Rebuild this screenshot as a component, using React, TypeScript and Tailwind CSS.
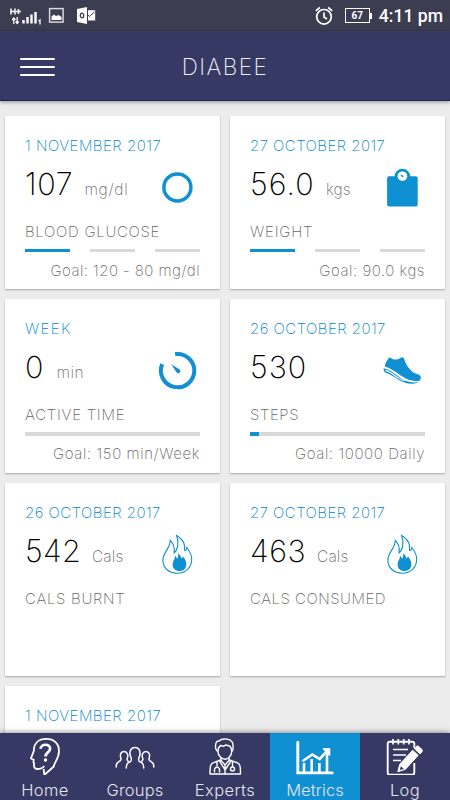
import type { ReactNode } from "react";

type Metric = {
  date: string;
  dateClass: string;
  value: string;
  valueClass: string;
  unit?: string;
  unitClass?: string;
  label: string;
  labelClass: string;
  goal?: string;
  goalClass?: string;
  progress?: "steps" | number;
  icon: ReactNode;
};

const CircleIcon = () => (
  <svg width="40" height="44" viewBox="0 0 40 44" fill="none">
    <circle cx="20.4" cy="23.4" r="13.5" stroke="#0f90d2" strokeWidth="3.5" />
  </svg>
);

const ScaleIcon = () => (
  <svg width="40" height="44" viewBox="0 0 40 44">
    <rect x="5.1" y="12.3" width="30.6" height="30.2" rx="2" fill="#0f90d2" />
    <circle cx="20.4" cy="12.6" r="7.8" fill="#0f90d2" />
    <circle cx="20.4" cy="12.2" r="4.8" fill="#fff" />
    <path d="M18 10.4l3.3 1.2a1 1 0 0 1-1.100 1.600z" fill="#0f90d2" />
  </svg>
);

const TimerIcon = () => (
  <svg width="40" height="44" viewBox="0 0 40 44" fill="none">
    <path d="M18.100 7.100A16.700 16.700 0 1 1 5.200 17.100" stroke="#0f90d2" strokeWidth="4" />
    <path d="M14.300 17.300l7.900 4.900a2.100 2.100 0 1 1-2.900 2.900z" fill="#0f90d2" />
  </svg>
);

const ShoeIcon = () => (
  <svg width="40" height="44" viewBox="0 0 40 44" fill="#0f90d2">
    <path d="M6.500 11.200Q7.500 9.800 9 10.900c1.700 1.600 5 2.300 7.600 1.100l2.800-1.600q1.800-.6 2.600 1.200c1.700 5 4.300 10.300 9.300 13.800 2.600 1.800 7.500 1.300 7.500 5.400 0 1-.2 2-.9 2.600-6.500 2-12.600-.7-17.500-3.800-5.700-3.600-9.500-7.500-17.500-10.100.2-3.600 2-5.600 3.600-8.300z" />
    <path d="M1.700 21.300c6.400 1.200 12.500 6.700 17.500 10.300 4.800 3.100 11.200 4.900 17.600 3.100-6 4.300-15 1.200-20.300-2-4.700-3-8-5.500-12.800-7-1.600-.7-2.300-2.300-2-4.400z" />
    <path d="M3.200 22.700c4.600.8 8.700 4.600 12.400 7.200 2.500 1.700 5 3 7.500 3.800l-.3.600c-3-.8-5.500-2-8-3.600-3.700-2.700-7.200-5.300-11-6.400z" fill="#fff" />
  </svg>
);

const FlameIcon = () => (
  <svg width="40" height="44" viewBox="0 0 40 44" fill="none">
    <path
      d="M19.600 4.500c3.500 2.100 7.300 5.300 7.800 10 .2 2-.2 3.800.2 4.800.8 1 2-.8 2.200-2.800 2.800 3.600 4.900 7.200 4.900 11.500 0 8.600-6.200 14.200-14.500 14.200-8.600 0-14.300-5.400-14.300-13.200 0-8 7.500-11.500 7.300-19.500 2.800 2.300 4.700 6.700 3.900 12.400 3-2.200 5.500-9.500 2.500-17.400z"
      stroke="#0f90d2"
      strokeWidth="1.100"
    />
    <path
      d="M20.800 22.200c2.200 1 3.200 3.400 3.600 5.400.9-.3 1.300-1.300 1.200-2.300 2.300 2.200 3.800 5 3.700 8 0 4.300-2.800 6.700-6.700 6.700-4.300 0-7-2.600-7-6.500 0-3.400 2.300-4.800 2.400-8.800 1.200.8 1.700 1.800 1.900 3.100 1.400-1.300 1.700-3.600.9-5.600z"
      fill="#0f90d2"
    />
  </svg>
);

const metrics: Metric[] = [
  {
    date: "1 NOVEMBER 2017",
    dateClass: "tracking-[0.5px]",
    value: "107",
    valueClass: "tracking-[0.7px]",
    unit: "mg/dl",
    unitClass: "tracking-[0.7px]",
    label: "BLOOD GLUCOSE",
    labelClass: "tracking-[0.7px]",
    goal: "Goal: 120 - 80 mg/dl",
    goalClass: "tracking-[0.45px]",
    progress: "steps",
    icon: <CircleIcon />,
  },
  {
    date: "27 OCTOBER 2017",
    dateClass: "tracking-[0.45px]",
    value: "56.0",
    valueClass: "tracking-[1.1px]",
    unit: "kgs",
    unitClass: "tracking-[0.1px]",
    label: "WEIGHT",
    labelClass: "tracking-[0.8px]",
    goal: "Goal: 90.0 kgs",
    goalClass: "tracking-[0.55px]",
    progress: "steps",
    icon: <ScaleIcon />,
  },
  {
    date: "WEEK",
    dateClass: "tracking-[1.4px]",
    value: "0",
    valueClass: "tracking-[2px]",
    unit: "min",
    unitClass: "tracking-[0.6px]",
    label: "ACTIVE TIME",
    labelClass: "tracking-[0.75px]",
    goal: "Goal: 150 min/Week",
    goalClass: "tracking-[0.6px]",
    progress: 0,
    icon: <TimerIcon />,
  },
  {
    date: "26 OCTOBER 2017",
    dateClass: "tracking-[0.45px]",
    value: "530",
    valueClass: "tracking-[1px]",
    label: "STEPS",
    labelClass: "tracking-[0.6px]",
    goal: "Goal: 10000 Daily",
    goalClass: "tracking-[0.6px]",
    progress: 5,
    icon: <ShoeIcon />,
  },
  {
    date: "26 OCTOBER 2017",
    dateClass: "tracking-[0.45px]",
    value: "542",
    valueClass: "tracking-[0.3px]",
    unit: "Cals",
    unitClass: "tracking-[0.1px]",
    label: "CALS BURNT",
    labelClass: "tracking-[0.7px]",
    icon: <FlameIcon />,
  },
  {
    date: "27 OCTOBER 2017",
    dateClass: "tracking-[0.45px]",
    value: "463",
    valueClass: "tracking-[0.5px]",
    unit: "Cals",
    unitClass: "tracking-[0.1px]",
    label: "CALS CONSUMED",
    labelClass: "tracking-[0.5px]",
    icon: <FlameIcon />,
  },
];

const Progress = ({ progress }: { progress: "steps" | number }) => {
  if (progress === "steps") {
    return (
      <div className="flex justify-between">
        <div className="h-[3.500px] w-[45px] bg-[#0f90d2]"></div>
        <div className="h-[3.500px] w-[45px] bg-[#d8d8d8]"></div>
        <div className="h-[3.500px] w-[45px] bg-[#d8d8d8]"></div>
      </div>
    );
  }
  return (
    <div className="h-[4px] w-full bg-[#d8d8d8]">
      <div className="h-full bg-[#0f90d2]" style={{ width: `${progress}%` }}></div>
    </div>
  );
};

const CardDate = ({ date, className }: { date: string; className: string }) => (
  <p className={`h-5 text-[15px] leading-5 font-extralight text-[#0086cd] whitespace-nowrap ${className}`}>{date}</p>
);

const Card = ({ metric }: { metric: Metric }) => (
  <div
    className={`bg-white rounded-[1px] shadow-[0_1px_2px_rgba(0,0,0,0.3)] px-5 pt-[20px] ${
      metric.goal ? "h-[173.500px]" : "h-[193px]"
    }`}
  >
    <CardDate date={metric.date} className={metric.dateClass} />
    <div className="h-[57px] flex justify-between pt-[8px]">
      <div className="flex items-baseline gap-[11px] h-10 whitespace-nowrap">
        <span className={`text-[30.500px] leading-10 font-extralight text-black ${metric.valueClass}`}>
          {metric.value}
        </span>
        {metric.unit && (
          <span className={`text-[15.500px] font-extralight text-[#6b6b6b] ${metric.unitClass}`}>{metric.unit}</span>
        )}
      </div>
      <div className="w-[40px] mr-[3px]">{metric.icon}</div>
    </div>
    <p
      className={`h-5 mt-[9px] text-[15px] leading-5 font-extralight text-[#666] whitespace-nowrap ${metric.labelClass}`}
    >
      {metric.label}
    </p>
    {metric.progress !== undefined && (
      <div className="h-[4px] mt-[7px]">
        <Progress progress={metric.progress} />
      </div>
    )}
    {metric.goal && (
      <p
        className={`mt-[8px] text-[15px] leading-5 font-extralight text-[#666] text-right whitespace-nowrap ${metric.goalClass}`}
      >
        {metric.goal}
      </p>
    )}
  </div>
);

const HomeIcon = () => (
  <svg width="40" height="42" viewBox="0 0 40 42" fill="none" stroke="#fff" strokeWidth="1.800" strokeLinejoin="round">
    <path d="M18.700 36l.6 6 9.500-8.500c.3-4 5.200-7.500 5.200-15.500 0-7.500-5-12.100-12.700-12.100-7.800 0-12.500 4.600-12.500 12.100l-2.900 7.500 2.900 1.300-.5 2.200.8 1c-.6 4 .4 6 3.200 6 2.500 0 5.500-.8 6.900-3" />
    <path d="M15.600 15.800c.3-5.400 9.700-5.400 9.500.1-.2 3.600-4.600 3.500-4.600 7.600" strokeWidth="2.700" />
    <circle cx="20.500" cy="27" r="1.700" fill="#fff" stroke="none" />
  </svg>
);

const GroupsIcon = () => (
  <svg width="40" height="42" viewBox="0 0 40 42" fill="none" stroke="#fff" strokeWidth="1.500" strokeLinecap="round">
    <path d="M11.300 35c-.2-4.200 1-5.200 3.200-6 2-.8 2.400-1.600 1.500-4.500-2-4-1.300-10 4-10s6 6 4 10c-.9 2.900-.5 3.700 1.500 4.500 2.200.8 3.400 1.800 3.200 6" />
    <path d="M1.200 34c-.2-3.600.8-4.400 2.400-5.200 2-.8 2.700-1.600 2.400-3.300-1.300-3.300-.4-7 3-7s4.600 3.500 3.200 7c-.3 1 .2 2 1 2.600" />
    <path d="M38.800 34c.2-3.600-.8-4.400-2.400-5.200-2-.8-2.700-1.600-2.400-3.300 1.300-3.300.4-7-3-7s-4.600 3.500-3.200 7c.3 1-.2 2-1 2.600" />
  </svg>
);

const ExpertsIcon = () => (
  <svg width="40" height="42" viewBox="0 0 40 42" fill="none" stroke="#fff" strokeWidth="1.400" strokeLinejoin="round">
    <path d="M13 18.500c-3.600-1.800-3.300-11 1-10.500 3-3.200 13.800-3 14 4 .3 3.700-.2 5.700-1.300 6.500" />
    <path d="M13 18.500c0-3.500.8-5 3-6l2.500.8 2-1.300 3.500.8c2 .8 2.700 2.200 2.700 5.700 0 4.500-3.700 7.700-6.700 7.700s-7-3.200-7-7.700z" />
    <path d="M16 25v2.500l4 4.500 4-4.500V25M15.500 27L8 29.800c-2.500 1-3 3.500-3 11.200h30.500c0-7.700-.5-10.200-3-11.200L24.500 27M14.500 28L20 37l6-9M20 32v9" />
    <path d="M12 29v4M9.500 39.500V36q2.500-4 5 0v3.500M27.500 28.500V34" />
    <circle cx="27.500" cy="36" r="2" />
  </svg>
);

const MetricsIcon = () => (
  <svg width="40" height="42" viewBox="0 0 40 42" fill="none" stroke="#fff">
    <path d="M2.800 9.500v30.400H37.200" strokeWidth="2.900" strokeLinecap="round" />
    <path d="M9 30v9M16.700 26v13M24.400 30v9M32 20v19" strokeWidth="2.600" />
    <path d="M7.500 28.200l9.800-6.700 7.400 4.500 8-8.700" strokeWidth="2.600" />
    <path d="M28 15.700h6.800v7z" fill="#fff" strokeLinejoin="round" />
  </svg>
);

const LogIcon = () => (
  <svg width="40" height="42" viewBox="0 0 40 42" fill="none" stroke="#fff">
    <path d="M29.300 15V10.500q0-1.800-2-1.800H4.700q-2 0-2 2v29q0 2 2 2h22.600q2 0 2-2V30" strokeWidth="1.900" />
    <path d="M8 6v5.500M13.300 6v5.500M18.700 6v5.500M24 6v5.500" strokeWidth="1.700" />
    <path d="M8 16.500h15M8 22h13M8 27.500h8" strokeWidth="1.700" />
    <path d="M12.800 38.700l2-7.500 12.800-13.900 5.600 5-12.800 14z" fill="#fff" />
    <path d="M29.300 15.500l2-2.100q1.200-1 2.300 0l3.200 2.900q1.200 1.200.2 2.400l-2 2.200z" fill="#fff" />
    <path d="M15.800 33.200l3.200 2.700-4.200 1.200z" fill="#363964" stroke="none" />
  </svg>
);

const navItems = [
  { label: "Home", icon: <HomeIcon />, labelClass: "tracking-[0.4px]" },
  { label: "Groups", icon: <GroupsIcon />, labelClass: "tracking-[0.2px]" },
  { label: "Experts", icon: <ExpertsIcon />, labelClass: "tracking-[0.4px]" },
  { label: "Metrics", icon: <MetricsIcon />, labelClass: "tracking-[0.1px]", active: true },
  { label: "Log", icon: <LogIcon />, labelClass: "tracking-[0.4px]" },
];

const StatusBar = () => (
  <div className="h-[31px] shrink-0 bg-[#3c3d50] flex items-center justify-between pl-[10px] pr-[7px]">
    <div className="flex items-center">
      <svg width="32" height="20" viewBox="0 0 32 20" fill="none" stroke="#fff">
        <path d="M1 2.500v6M5 2.500v6M1 5.500h4M6 5.500h5M8.500 3v5" strokeWidth="1.500" />
        <path d="M3.800 18v-6M2.200 14l1.600-2L5.400 14M7.200 11v6M5.700 15.500l1.500 2 1.500-2" strokeWidth="1.300" />
        <path d="M13.500 14v3.500M17.500 11v6.500M21.500 8.500v9M25.500 6v11.500" strokeWidth="2.400" />
        <path d="M28.500 15l1.500-1V18.500" strokeWidth="1.300" />
      </svg>
      <svg className="ml-[6px]" width="17" height="17" viewBox="0 0 17 17">
        <rect x="1.600" y="1.600" width="13.500" height="13.500" fill="none" stroke="#d8d8de" strokeWidth="1.500" />
        <path d="M3.500 13V9.500l2.500-2 2 1.500 2.500-1 3 2V13z" fill="#fff" />
      </svg>
      <svg className="ml-[12px]" width="19" height="17" viewBox="0 0 19 17">
        <path d="M0 2l10-2v17L0 15z" fill="#fff" />
        <path d="M11 3.200h7.200v10.300H11z" fill="#fff" />
        <path d="M11 8l1.500 1.500 5-4.500" fill="none" stroke="#3c3d50" />
        <ellipse cx="5" cy="8.500" rx="1.700" ry="2.300" fill="none" stroke="#3c3d50" strokeWidth="1.300" />
      </svg>
    </div>
    <div className="flex items-center">
      <svg width="20" height="20" viewBox="0 0 20 20" fill="none" stroke="#fff" strokeWidth="1.700">
        <circle cx="10" cy="10.800" r="7.300" />
        <path d="M10 6.500V11l3 2M1.800 4.800l4-3.300M18.200 4.800l-4-3.300" />
      </svg>
      <div className="ml-[11px] flex items-center">
        <div className="w-[25px] h-[15px] border-[1.500px] border-white flex items-center justify-center text-white font-['Roboto'] font-bold text-[10px] leading-none">
          67
        </div>
        <div className="w-[2px] h-[6px] bg-white"></div>
      </div>
      <p className="ml-[7px] pt-px text-white font-['Roboto'] font-medium text-[17.600px] leading-[31px] whitespace-nowrap">
        4:11 pm
      </p>
    </div>
  </div>
);

const App = () => {
  return (
    <div className="w-[450px] h-[800px] overflow-hidden flex flex-col bg-[#ececec] font-['Inter',sans-serif]">
      <StatusBar />
      <header className="z-10 h-[70px] shrink-0 bg-[#363964] border-b border-[#1c2364] shadow-[0_1px_4px_rgba(0,0,0,0.4)] grid grid-cols-3 items-center px-5">
        <button className="w-[35px] flex flex-col gap-[6px] pt-[2px]">
          <span className="h-[2px] bg-white rounded-full"></span>
          <span className="h-[2px] bg-white rounded-full"></span>
          <span className="h-[2px] bg-white rounded-full"></span>
        </button>
        <h1 className="text-center text-[#f2f2f6] font-extralight text-[22.500px] tracking-[1.500px] pt-[2px]">
          DIABEE
        </h1>
      </header>
      <main className="flex-1 min-h-0 overflow-hidden px-[5px] pt-[14.700px]">
        <div className="grid grid-cols-2 gap-[10px]">
          {metrics.map((metric, i) => (
            <Card key={i} metric={metric} />
          ))}
          <div className="bg-white rounded-[1px] shadow-[0_1px_2px_rgba(0,0,0,0.3)] px-5 pt-[20px] h-[50px]">
            <CardDate date="1 NOVEMBER 2017" className="tracking-[0.5px]" />
          </div>
        </div>
      </main>
      <nav className="z-10 h-[67px] shrink-0 grid grid-cols-5 bg-[#363964] shadow-[0_-1px_5px_rgba(0,0,0,0.4)]">
        {navItems.map((item) => (
          <button
            key={item.label}
            className={`flex flex-col items-center text-[#e4e5ee] ${item.active ? "bg-[#0f90d2]" : ""}`}
          >
            {item.icon}
            <span className={`mt-[5px] text-[16.500px] leading-5 font-light ${item.labelClass}`}>{item.label}</span>
          </button>
        ))}
      </nav>
    </div>
  );
};

export default App;
